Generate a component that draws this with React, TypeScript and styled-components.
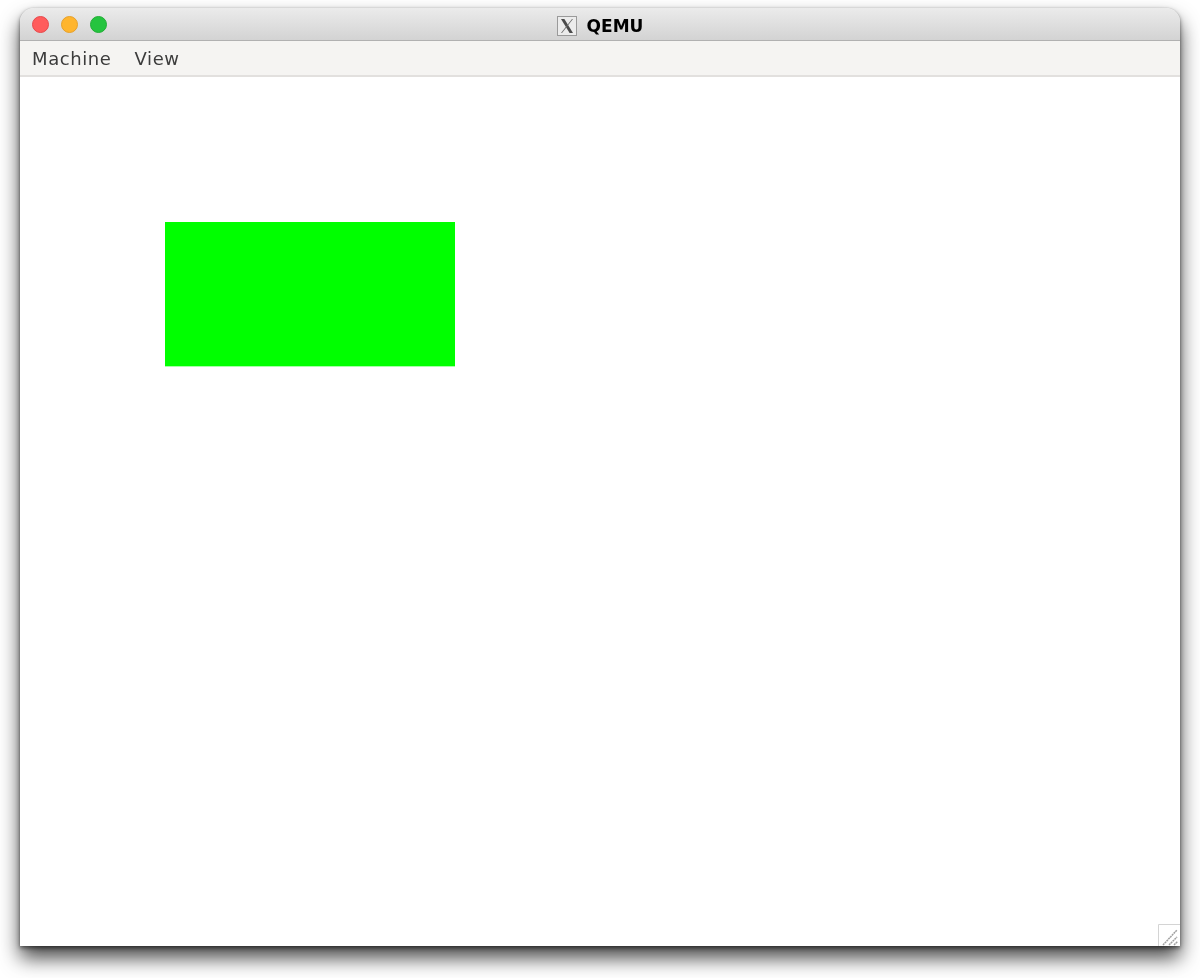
import styled, { createGlobalStyle } from 'styled-components';

const GlobalStyle = createGlobalStyle`
  html, body {
    margin: 0;
    padding: 0;
    background: #ffffff;
    height: 978px;
    overflow: hidden;
  }
`;

const Desktop = styled.div`
  width: 1200px;
  height: 978px;
  box-sizing: border-box;
  padding: 8px 20px 32px;
  background: #ffffff;
`;

const Window = styled.div`
  width: 1160px;
  height: 938px;
  display: flex;
  flex-direction: column;
  position: relative;
  background: #ffffff;
  border-radius: 14px 14px 0 0;
  box-shadow: 0 0 1px rgba(0, 0, 0, 0.25), 0 2px 4px rgba(0, 0, 0, 0.5), 0 12px 20px rgba(0, 0, 0, 0.72);
  overflow: hidden;
`;

const TitleBar = styled.header`
  height: 33px;
  flex: none;
  box-sizing: border-box;
  display: flex;
  align-items: center;
  justify-content: center;
  padding-top: 3px;
  position: relative;
  background: linear-gradient(#ebebeb, #d3d3d3);
  border-bottom: 1px solid #b1b1b1;
`;

const TrafficLights = styled.div`
  position: absolute;
  left: 12px;
  top: 8px;
  display: flex;
  gap: 12px;
`;

const Light = styled.span<{ $fill: string; $edge: string }>`
  width: 17px;
  height: 17px;
  box-sizing: border-box;
  border-radius: 50%;
  background: ${(p) => p.$fill};
  border: 1px solid ${(p) => p.$edge};
`;

const TitleIcon = styled.svg`
  width: 20px;
  height: 20px;
  margin-right: 10px;
  filter: blur(0.6px);
`;

const Title = styled.span`
  font-family: 'DejaVu Sans', sans-serif;
  font-weight: 700;
  font-size: 17px;
  color: #000000;
  filter: blur(0.4px);
`;

const MenuBar = styled.nav`
  height: 36px;
  flex: none;
  box-sizing: border-box;
  display: flex;
  align-items: center;
  gap: 23px;
  padding: 0 12px;
  background: #f5f4f2;
  border-bottom: 2px solid #e2e0de;
`;

const MenuItem = styled.span`
  font-family: 'DejaVu Sans', sans-serif;
  font-size: 18px;
  color: #3c3c3c;
  letter-spacing: 0.6px;
  filter: blur(0.4px);
`;

const Screen = styled.main`
  flex: 1;
  padding: 145px 0 0 145px;
  background: #ffffff;
`;

const GreenRect = styled.div`
  width: 290px;
  height: 145px;
  box-sizing: border-box;
  background: #00ff00;
  border-bottom: 1px solid #a8ffa8;
`;

const ResizeGrip = styled.svg`
  position: absolute;
  right: 0;
  bottom: 0;
  width: 22px;
  height: 22px;
  filter: blur(0.3px);
`;

export default function App() {
  return (
    <>
      <GlobalStyle />
      <Desktop>
        <Window>
          <TitleBar>
            <TrafficLights>
              <Light $fill="#ff5c5c" $edge="#e6494c" />
              <Light $fill="#ffb52e" $edge="#e5a02b" />
              <Light $fill="#25c43f" $edge="#22ad36" />
            </TrafficLights>
            <TitleIcon viewBox="0 0 20 20">
              <rect x="0.5" y="0.5" width="19" height="19" fill="#ececec" stroke="#9a9a9a" />
              <path d="M4 3h3.4L16 17h-3.4z" fill="#4a4a4a" />
              <path d="M15 3h1L5 17H4z" fill="#6a6a6a" />
            </TitleIcon>
            <Title>QEMU</Title>
          </TitleBar>
          <MenuBar>
            <MenuItem>Machine</MenuItem>
            <MenuItem>View</MenuItem>
          </MenuBar>
          <Screen>
            <GreenRect />
          </Screen>
          <ResizeGrip viewBox="0 0 22 22">
            <path d="M0.5 22V0.5H22" fill="#ffffff" stroke="#d4d4d4" />
            <path d="M5 21L19 6M11 21L19 13M16 21L19.500 17.500" stroke="#a0a0a0" strokeWidth="1.5" strokeDasharray="2 0.6" fill="none" />
          </ResizeGrip>
        </Window>
      </Desktop>
    </>
  );
}
